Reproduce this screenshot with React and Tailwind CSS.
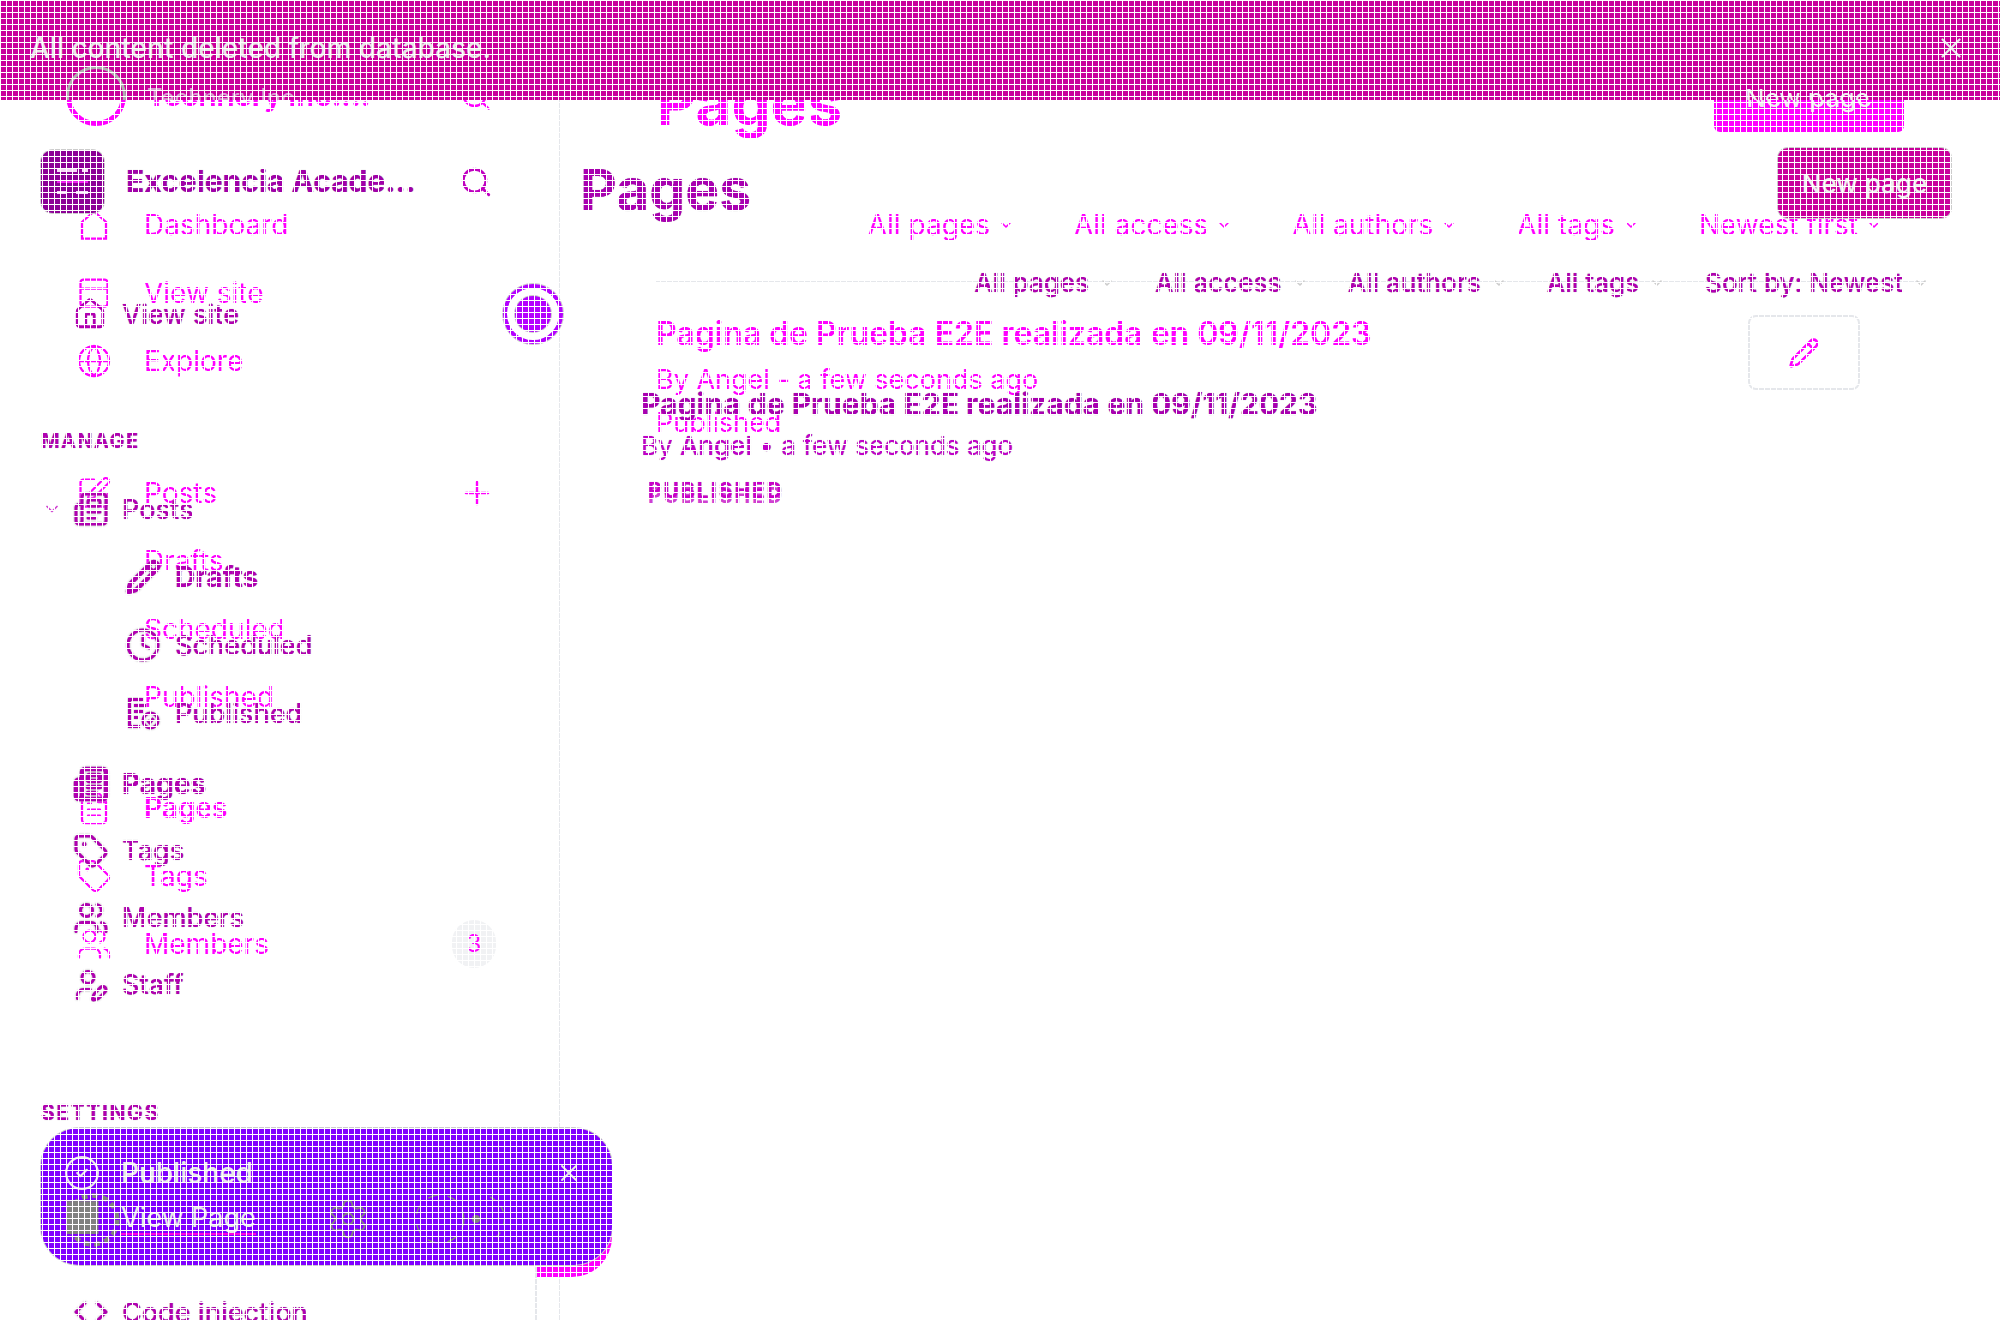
import { Globe, SquarePen, Pencil, Clock, Tag, Users, UserPen, PanelTop, Code, CircleCheck, Settings, Plus, Search, X, ChevronDown, Newspaper, FileText, House } from 'lucide-react'

// two renders of the same admin screen laid over each other, then the diff grid on top
const OLD_FILTERS = ['All pages', 'All access', 'All authors', 'All tags', 'Newest first']
const NEW_FILTERS = ['All pages', 'All access', 'All authors', 'All tags', 'Sort by: Newest']

const edge = '[text-shadow:0_0_1px_#aaa]'

function PlainHouse(props) {
  return (
    <svg viewBox="0 0 24 24" fill="none" stroke="currentColor" strokeWidth={props.strokeWidth} width={props.size} height={props.size} className={props.className}>
      <path d="M4 21V10l8-7 8 7v11z" />
    </svg>
  )
}

function PublishedIcon(props) {
  return (
    <svg viewBox="0 0 24 24" fill="none" stroke="currentColor" strokeWidth={2} width={props.size} height={props.size} className={props.className}>
      <path d="M12 3H3v18h7M6 7h8M6 11h6M6 15h3" />
      <circle cx="17" cy="17" r="5" />
      <path d="M15 17l1.5 1.5L19 15.5" />
    </svg>
  )
}

function OldRow({ icon: Icon, label, sub, bold, children }) {
  return (
    <div className="flex h-[68px] items-center pl-[76px] text-[28px] leading-none whitespace-nowrap text-[#ff00ff]">
      <span className="flex w-[68px] shrink-0">{!sub && <Icon size={36} strokeWidth={1.5} />}</span>
      <span className={bold ? 'font-semibold' : ''}>{label}</span>
      {children}
    </div>
  )
}

function NewRow({ icon: Icon, label, chevron, sub, bold, tight }) {
  return (
    <div className={`flex items-center whitespace-nowrap text-[#b000b0] ${edge} ${tight ? 'h-[67px]' : 'h-[68px]'} ${sub ? 'pl-[84px]' : ''}`}>
      {!sub && (
        <span className="flex w-[32px] shrink-0 justify-start pl-[1px] text-[#d040d0]">
          {chevron && <ChevronDown size={20} strokeWidth={2} />}
        </span>
      )}
      <Icon size={36} strokeWidth={bold ? 3 : 2} className="shrink-0 drop-shadow-[0_0_1px_#aaa]" />
      <span className={`leading-none ${sub ? 'ml-[14px]' : 'ml-[13px]'} ${bold ? 'text-[28px] font-bold' : 'text-[27px] font-medium'}`}>{label}</span>
    </div>
  )
}

function OldLayer() {
  return (
    <div className="absolute inset-0 flex">
      <aside className="w-[560px] shrink-0 pt-[66px]">
        <div className="flex h-[60px] items-center pl-[66px] text-[#ff00ff]">
          <span className="size-[60px] shrink-0 rounded-full border-[5px] border-[#ff00ff]" />
          <span className="ml-[21px] w-[262px] whitespace-nowrap text-[29px] font-bold">Technery Inc....</span>
          <Search size={34} strokeWidth={1.6} className="ml-[50px]" />
        </div>
        <div className="mt-[65px]">
          <OldRow icon={PlainHouse} label="Dashboard" />
          <OldRow icon={PanelTop} label="View site" />
          <OldRow icon={Globe} label="Explore" />
        </div>
        <div className="mt-[64px]">
          <OldRow icon={SquarePen} label="Posts">
            <Plus size={38} strokeWidth={1.5} className="ml-[241px]" />
          </OldRow>
          <OldRow sub label="Drafts" />
          <OldRow sub label="Scheduled" />
          <OldRow sub label="Published" />
        </div>
        <div className="mt-[43px]">
          <OldRow icon={FileText} label="Pages" bold />
          <OldRow icon={Tag} label="Tags" />
          <OldRow icon={Users} label="Members">
            <span className="ml-[183px] flex h-[48px] w-[44px] items-center justify-center rounded-full bg-[#f1f2f4] text-[24px]">3</span>
          </OldRow>
        </div>
      </aside>

      <main className="flex-1 pl-[96px] pr-[74px] pt-[62px] text-[#ff00ff]">
        <div className="flex items-center justify-between">
          <h1 className="-mt-[4px] text-[62px] font-bold leading-[86px]">Pages</h1>
          <div className="mb-[16px] mr-[22px] flex h-[70px] w-[190px] items-center justify-center rounded-[6px] bg-[#ff00ff] text-[26px] font-medium text-[#eee]">New page</div>
        </div>
        <div className="mt-[60px] flex justify-end gap-[60px] border-b-2 border-[#e5e7eb] pb-[39px] pr-[44px] text-[28px] leading-[34px]">
          {OLD_FILTERS.map(f => (
            <span key={f} className="flex items-center gap-[8px]">{f}<ChevronDown size={16} strokeWidth={2.4} /></span>
          ))}
        </div>
        <div className="flex justify-between pt-[32px]">
          <div>
            <div className="-mt-[1px] text-[32px] font-semibold leading-[40px]">Pagina de Prueba E2E realizada en 09/11/2023</div>
            <div className="mt-[9px] text-[27px] leading-[34px]">By Angel - a few seconds ago</div>
            <div className="mt-[9px] text-[27px] leading-[34px]">Published</div>
          </div>
          <div className="mr-[66px] flex h-[75px] w-[112px] items-center justify-center rounded-[8px] border-2 border-[#e5e7eb]">
            <Pencil size={32} strokeWidth={2} />
          </div>
        </div>
      </main>
    </div>
  )
}

function NewLayer() {
  return (
    <div className="absolute inset-0 flex">
      <aside className="w-[560px] shrink-0 border-r-2 border-[#e5e7eb] pl-[41px] pt-[149px]">
        <div className="flex h-[65px] items-center">
          <div className="flex size-[63px] shrink-0 flex-col justify-center gap-[8px] rounded-[12px] bg-[#8c0096] px-[16px] shadow-[0_0_0_1px_#ccc]">
            <span className="flex justify-between"><span className="h-[3px] w-[20px] bg-[#f8d8f8]" /><span className="h-[3px] w-[6px] bg-[#f8d8f8]" /></span>
            <span className="h-[3px] w-full bg-[#f020f0]" />
            <span className="flex justify-between"><span className="h-[3px] w-[9px] bg-[#f8d8f8]" /><span className="h-[3px] w-[12px] bg-[#f8d8f8]" /></span>
          </div>
          <span className={`ml-[22px] w-[290px] whitespace-nowrap text-[30px] font-bold text-[#a000a8] ${edge}`}>Excelencia Acade...</span>
          <Search size={34} strokeWidth={2} className="ml-[43px] text-[#c000c0]" />
        </div>
        <div className="mt-[66px] flex h-[68px] w-[522px] items-center whitespace-nowrap text-[#b000b0]">
          <House size={34} strokeWidth={2} className="ml-[32px] shrink-0" />
          <span className={`ml-[15px] text-[27px] font-medium leading-none ${edge}`}>View site</span>
          <span className="ml-auto flex size-[60px] shrink-0 items-center justify-center rounded-full border-[4px] border-[#b400ff] shadow-[0_0_0_1px_#ccc]">
            <span className="size-[36px] rounded-full bg-[#b400ff] shadow-[0_0_0_1px_#ccc]" />
          </span>
        </div>
        <div className={`mt-[78px] flex h-[30px] items-center text-[20px] font-bold tracking-[1.4px] text-[#b000b0] ${edge}`}>MANAGE</div>
        <div className="mt-[19px]">
          <NewRow icon={Newspaper} label="Posts" chevron />
          <NewRow icon={Pencil} label="Drafts" sub bold />
          <NewRow icon={Clock} label="Scheduled" sub />
          <NewRow icon={PublishedIcon} label="Published" sub />
        </div>
        <div className="mt-[3px]">
          <NewRow icon={Newspaper} label="Pages" bold tight />
          <NewRow icon={Tag} label="Tags" tight />
          <NewRow icon={Users} label="Members" tight />
          <NewRow icon={UserPen} label="Staff" tight />
        </div>
        <div className={`mt-[80px] flex h-[30px] items-center text-[21px] font-bold tracking-[1.6px] text-[#b000b0] ${edge}`}>SETTINGS</div>
        <div className="mt-[150px]">
          <NewRow icon={Code} label="Code injection" />
        </div>
      </aside>

      <main className="flex-1 pl-[20px] pr-[49px] pt-[148px]">
        <div className="flex h-[70px] items-center justify-between">
          <h1 className={`mt-[14px] text-[57px] font-bold text-[#a800b0] ${edge}`}>Pages</h1>
          <div className="flex h-[70px] w-[173px] items-center justify-center rounded-[10px] bg-[#c8009c] text-[26px] font-medium text-[#eee] shadow-[0_0_0_1px_#ccc]">New page</div>
        </div>
        <div className={`mt-[47px] flex justify-end gap-[40px] pr-[22px] text-[26px] font-medium leading-[36px] text-[#b000b0] ${edge}`}>
          {NEW_FILTERS.map(f => (
            <span key={f} className="flex items-center gap-[10px]">{f}<ChevronDown size={16} strokeWidth={2.4} className="text-[#ccc]" /></span>
          ))}
        </div>
        <div className="pl-[61px] pt-[84px]">
          <div className={`text-[30px] font-bold leading-[38px] text-[#a800b0] ${edge}`}>Pagina de Prueba E2E realizada en 09/11/2023</div>
          <div className={`mt-[7px] text-[26px] leading-[32px] text-[#c000c8] ${edge}`}>By <span className="font-medium">Angel</span> • a few seconds ago</div>
          <div className="ml-[7px] mt-[15px] text-[21px] font-bold leading-[28px] tracking-[2px] text-[#c800c8] [text-shadow:0_5px_0_#d040d0,0_0_1px_#aaa]">PUBLISHED</div>
        </div>
      </main>
    </div>
  )
}

function Toast() {
  return (
    <>
      <div className="absolute left-[536px] top-[1225px] h-[52px] w-[76px] rounded-br-[40px] bg-[#ff00ff]" />
      <div className="absolute bottom-0 left-[535px] top-[1265px] w-[2px] bg-[#e5e7eb]" />
      <div className="absolute left-[41px] top-[1128px] h-[137px] w-[571px] rounded-[38px] bg-[#8000ff] px-[22px] pt-[26px] text-[#e8e8e8] shadow-[0_0_0_1px_#ccc]">
        <div className="flex h-[38px] items-center">
          <CircleCheck size={38} strokeWidth={1.4} />
          <span className="ml-[20px] text-[28px] font-medium leading-none">Published</span>
          <X size={28} strokeWidth={1.6} className="ml-auto mr-[7px]" />
        </div>
        <div className="mt-[2px] flex h-[50px] items-center">
          <svg width="62" height="62" viewBox="0 0 66 62" className="ml-[-4px] shrink-0 text-[#808080]">
            <rect x="8" y="12" width="34" height="35" fill="currentColor" />
            <circle cx="36" cy="32" r="26" fill="none" stroke="currentColor" strokeWidth="5" strokeDasharray="6 5" />
          </svg>
          <span className="ml-[0px] border-b-2 border-[#ff00e0] text-[27px] leading-[30px] whitespace-nowrap">View Page</span>
          <Settings size={44} strokeWidth={1} className="ml-[70px] text-[#808080]" />
          <svg width="100" height="52" viewBox="0 0 100 52" className="ml-[44px] shrink-0 text-[#808080]">
            <circle cx="26" cy="26" r="24" fill="none" stroke="currentColor" strokeWidth="1.4" strokeDasharray="10 10" />
            <circle cx="62" cy="26" r="4" fill="currentColor" />
            <path d="M76 4a24 24 0 0 1 0 44" fill="none" stroke="currentColor" strokeWidth="1.4" strokeDasharray="6 8" />
          </svg>
        </div>
      </div>
    </>
  )
}

function Banner() {
  return (
    <div className="absolute left-0 top-0 flex h-[100px] w-full items-center overflow-hidden bg-[#c8009c] pb-[5px] pl-[30px] pr-[32px] text-[#e8e8e8]">
      <span className="text-[28px] font-medium">All content deleted from database.</span>
      <X size={34} strokeWidth={1.6} className="ml-auto" />
      {/* what the other render still shows through the banner */}
      <span className="absolute left-[66px] top-[66px] size-[60px] rounded-full border-[3px] border-[#b0b0b0]" />
      <span className="absolute left-[147px] top-[80px] text-[24px] text-[#d8a0d0]">Technery Inc....</span>
      <span className="absolute left-[1745px] top-[79px] text-[26px] text-[#eee]">New page</span>
    </div>
  )
}

export default function App() {
  return (
    <div className="relative h-[1320px] w-[2000px] overflow-hidden bg-white font-['Inter',sans-serif]">
      <OldLayer />
      <NewLayer />
      <Toast />
      <Banner />
      <div className="pointer-events-none absolute inset-0 bg-[linear-gradient(to_right,#fff_1px,transparent_1px),linear-gradient(to_bottom,#fff_1px,transparent_1px)] bg-[size:6px_6px]" />
    </div>
  )
}
